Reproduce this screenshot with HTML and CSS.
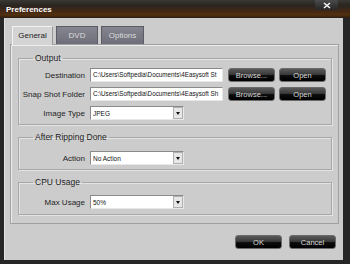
FILE: index.html
```html
<!DOCTYPE html>
<html lang="en">

<head>
    <meta charset="UTF-8">
    <meta name="viewport" content="width=device-width, initial-scale=1.0">
    <title>Preferences</title>
    <link rel="stylesheet" href="styles.css">
</head>

<body>
    <div class="window">
        <div class="titlebar">
            <span class="title">Preferences</span>
            <span class="close-button">
                <svg width="10" height="7" viewBox="0 0 10 7">
                    <path d="M2 1 L8 6 M8 1 L2 6" stroke="#f2f2f2" stroke-width="1.6" fill="none" />
                </svg>
            </span>
        </div>

        <div class="dialog">
            <div class="tabs">
                <div class="tab tab-general active">General</div>
                <div class="tab tab-dvd">DVD</div>
                <div class="tab tab-options">Options</div>
            </div>

            <div class="panel">
                <fieldset class="group group-output">
                    <legend>Output</legend>
                    <div class="row">
                        <label>Destination</label>
                        <div class="field">C:\Users\Softpedia\Documents\4Easysoft St</div>
                        <button class="dark-button">Browse...</button>
                        <button class="dark-button">Open</button>
                    </div>
                    <div class="row">
                        <label>Snap Shot Folder</label>
                        <div class="field">C:\Users\Softpedia\Documents\4Easysoft Sh</div>
                        <button class="dark-button">Browse...</button>
                        <button class="dark-button">Open</button>
                    </div>
                    <div class="row">
                        <label>Image Type</label>
                        <div class="select"><span>JPEG</span><i class="arrow"></i></div>
                    </div>
                </fieldset>

                <fieldset class="group group-ripping">
                    <legend>After Ripping Done</legend>
                    <div class="row">
                        <label>Action</label>
                        <div class="select"><span>No Action</span><i class="arrow"></i></div>
                    </div>
                </fieldset>

                <fieldset class="group group-cpu">
                    <legend>CPU Usage</legend>
                    <div class="row">
                        <label>Max Usage</label>
                        <div class="select"><span>50%</span><i class="arrow"></i></div>
                    </div>
                </fieldset>
            </div>

            <div class="footer">
                <button class="dark-button">OK</button>
                <button class="dark-button">Cancel</button>
            </div>
        </div>
    </div>
</body>

</html>
```

FILE: styles.css
```css
body {
    margin: 0;
    background-color: #1c1c1c;
    font-family: "Liberation Sans", Arial, sans-serif;
}

.window {
    width: 350px;
    height: 264px;
    background-color: #262626;
    display: flex;
    flex-direction: column;
}

.titlebar {
    height: 18px;
    display: flex;
    justify-content: space-between;
    align-items: flex-start;
    background: linear-gradient(to bottom, #3a3836 0%, #2a2520 30%, #452814 65%, #52300f 82%, #2e1c10 100%);
}

.title {
    color: #ffffff;
    font-size: 8px;
    font-weight: bold;
    padding: 5px 0 0 6px;
    line-height: 9px;
}

.close-button {
    width: 23px;
    height: 10px;
    margin-right: 12px;
    display: flex;
    align-items: center;
    justify-content: center;
    background: linear-gradient(to bottom, #4a4a4a, #262626);
    border-radius: 0 0 3px 3px;
}

.dialog {
    margin: 0 7px 4px 4px;
    height: 242px;
    background-color: #cccccc;
    padding: 8px 5px 0 5px;
    box-sizing: border-box;
    border-left: 1px solid #e2e2e2;
}

.tabs {
    display: flex;
    gap: 3px;
    padding-left: 2px;
    height: 18px;
}

.tab {
    height: 18px;
    box-sizing: border-box;
    font-size: 8px;
    line-height: 17px;
    text-align: center;
    color: #dcdcdc;
    background: linear-gradient(to bottom, #85858f, #6e6e7a);
    border: 1px solid #5c5c66;
    border-bottom: none;
}

.tab-general {
    width: 41px;
}

.tab-dvd {
    width: 42px;
}

.tab-options {
    width: 43px;
}

.tab.active {
    color: #222222;
    background: #d4d4d4;
    border-color: #f2f2f2 #9a9a9a #9a9a9a #f2f2f2;
    height: 19px;
    margin-bottom: -1px;
    position: relative;
}

.panel {
    border: 1px solid #a0a0a0;
    box-shadow: inset 1px 1px 0 #ececec;
    padding: 8px 6px 8px 7px;
    width: 329px;
    box-sizing: border-box;
}

.group {
    margin: 0;
    padding: 4px 0 4px 0;
    border: 1px solid #a8a8a8;
    box-shadow: inset 1px 1px 0 #e4e4e4, 1px 1px 0 #e4e4e4;
}

.group legend {
    font-size: 8.5px;
    line-height: 11px;
    color: #1e1e1e;
    padding: 0 2px;
    margin-left: 14px;
}

.group-output {
    height: 72px;
    box-sizing: border-box;
}

.group-ripping {
    margin-top: 7px;
    padding-top: 8px;
    height: 38px;
    box-sizing: border-box;
}

.group-cpu {
    margin-top: 7px;
    padding-top: 7px;
    height: 38px;
    box-sizing: border-box;
}

.row {
    display: flex;
    align-items: center;
    height: 14px;
    margin-bottom: 5px;
}

.row:last-child {
    margin-bottom: 0;
}

.row label {
    width: 66px;
    text-align: right;
    font-size: 8px;
    color: #1e1e1e;
    margin-right: 5px;
    white-space: nowrap;
}

.field {
    width: 133px;
    height: 14px;
    box-sizing: border-box;
    background: #ffffff;
    border: 1px solid #8a8a8a;
    border-right-color: #e8e8e8;
    border-bottom-color: #e8e8e8;
    font-size: 6.3px;
    line-height: 12px;
    padding-left: 2px;
    white-space: nowrap;
    overflow: hidden;
    color: #111111;
    margin-right: 5px;
}

.select {
    width: 94px;
    height: 14px;
    box-sizing: border-box;
    background: #ffffff;
    border: 1px solid #8a8a8a;
    border-right-color: #e8e8e8;
    border-bottom-color: #e8e8e8;
    display: flex;
    justify-content: space-between;
    align-items: center;
    font-size: 6.5px;
    padding-left: 2px;
    color: #111111;
}

.arrow {
    width: 10px;
    height: 12px;
    box-sizing: border-box;
    background: #e6e6e6;
    border: 1px solid #b0b0b0;
    display: flex;
    align-items: center;
    justify-content: center;
}

.arrow::after {
    content: "";
    border-left: 2.5px solid transparent;
    border-right: 2.5px solid transparent;
    border-top: 3px solid #111111;
}

.dark-button {
    width: 47px;
    height: 14px;
    padding: 0;
    font-family: "Liberation Sans", Arial, sans-serif;
    font-size: 7.5px;
    color: #d8d8d8;
    background: linear-gradient(to bottom, #5a5a5a 0%, #3a3a3a 45%, #0c0c0c 55%, #000000 100%);
    border: 1px solid #6a6a6a;
    border-radius: 3px;
    margin-right: 4px;
}

.footer {
    display: flex;
    justify-content: flex-end;
    gap: 7px;
    margin-top: 11px;
    padding-right: 2px;
}

.footer .dark-button {
    margin-right: 0;
}
```
